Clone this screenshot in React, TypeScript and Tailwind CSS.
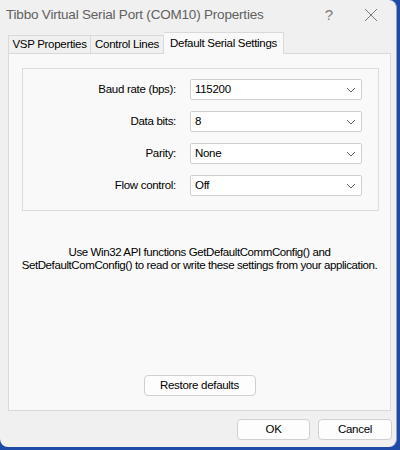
import React from "react";

const font = { fontFamily: '"Liberation Sans", Arial, sans-serif' };

function Chevron() {
  return (
    <svg width="10" height="6" viewBox="0 0 10 6" className="shrink-0">
      <path d="M1 1 L5 5 L9 1" fill="none" stroke="#606060" strokeWidth="1" />
    </svg>
  );
}

function Row({ label, value }: { label: string; value: string }) {
  return (
    <div className="flex items-center h-[21px]">
      <div className="w-[153px] text-right text-[11.5px] tracking-[-0.3px] text-[#000] whitespace-nowrap">{label}</div>
      <div className="ml-[14px] w-[172px] h-[21px] bg-white border border-[#cfcfcf] rounded-[2px] flex items-center justify-between pl-[4px] pr-[5px] text-[11.5px] tracking-[-0.3px] text-black">
        <span>{value}</span>
        <Chevron />
      </div>
    </div>
  );
}

export default function App() {
  return (
    <div className="w-[400px] h-[450px] bg-[#1e4aa8] overflow-hidden" style={font}>
      <div className="w-[397px] h-[447px] bg-[#f0f0f0] rounded-[8px] rounded-tl-none flex flex-col border-r border-[#9aa4b8]">
        <div className="h-[30px] flex items-center pl-[6px] shrink-0">
          <span className="text-[13.5px] tracking-[-0.2px] text-[#606060] flex-1 whitespace-nowrap">Tibbo Virtual Serial Port (COM10) Properties</span>
          <span className="text-[15px] text-[#7a7a7a] w-[20px] text-center mr-[25px]">?</span>
          <svg width="14" height="14" viewBox="0 0 14 14" className="mr-[18px]">
            <path d="M1 1 L13 13 M13 1 L1 13" stroke="#7a7a7a" strokeWidth="1" />
          </svg>
        </div>
        <div className="flex items-end h-[24px] pl-[8px] shrink-0 mt-[-1px] text-[11.5px] tracking-[-0.3px] whitespace-nowrap">
          <div className="h-[18px] w-[83px] border border-[#d9d9d9] border-b-0 flex items-center justify-center bg-[#f0f0f0]">VSP Properties</div>
          <div className="h-[18px] w-[73px] border border-l-0 border-[#d9d9d9] border-b-0 flex items-center justify-center bg-[#f0f0f0]">Control Lines</div>
          <div className="h-[22px] w-[120px] border border-l-0 border-[#d9d9d9] border-b-0 flex items-center justify-center bg-[#f9f9f9] relative z-10 mb-[-1px]">Default Serial Settings</div>
        </div>
        <div className="mx-[8px] w-[383px] h-[358px] border border-[#d9d9d9] bg-[#f9f9f9] flex flex-col shrink-0">
          <div className="mt-[14px] ml-[13px] w-[357px] h-[143px] border border-[#dcdcdc] flex flex-col gap-[11px] pt-[10px]">
            <Row label="Baud rate (bps):" value="115200" />
            <Row label="Data bits:" value="8" />
            <Row label="Parity:" value="None" />
            <Row label="Flow control:" value="Off" />
          </div>
          <div className="mt-[35px] text-center text-[11.5px] tracking-[-0.4px] leading-[13px] text-black whitespace-nowrap">
            <div>Use Win32 API functions GetDefaultCommConfig() and</div>
            <div>SetDefaultComConfig() to read or write these settings from your application.</div>
          </div>
          <div className="mt-[103px] flex justify-center">
            <div className="w-[112px] h-[21px] bg-[#fdfdfd] border border-[#d0d0d0] rounded-[4px] text-[11.5px] tracking-[-0.3px] flex items-center justify-center">Restore defaults</div>
          </div>
        </div>
        <div className="flex justify-end gap-[8px] pr-[4px] mt-[8px] text-[11.5px] tracking-[-0.3px]">
          <div className="w-[73px] h-[21px] bg-[#fdfdfd] border border-[#d0d0d0] rounded-[4px] flex items-center justify-center">OK</div>
          <div className="w-[74px] h-[21px] bg-[#fdfdfd] border border-[#d0d0d0] rounded-[4px] flex items-center justify-center">Cancel</div>
        </div>
      </div>
    </div>
  );
}
